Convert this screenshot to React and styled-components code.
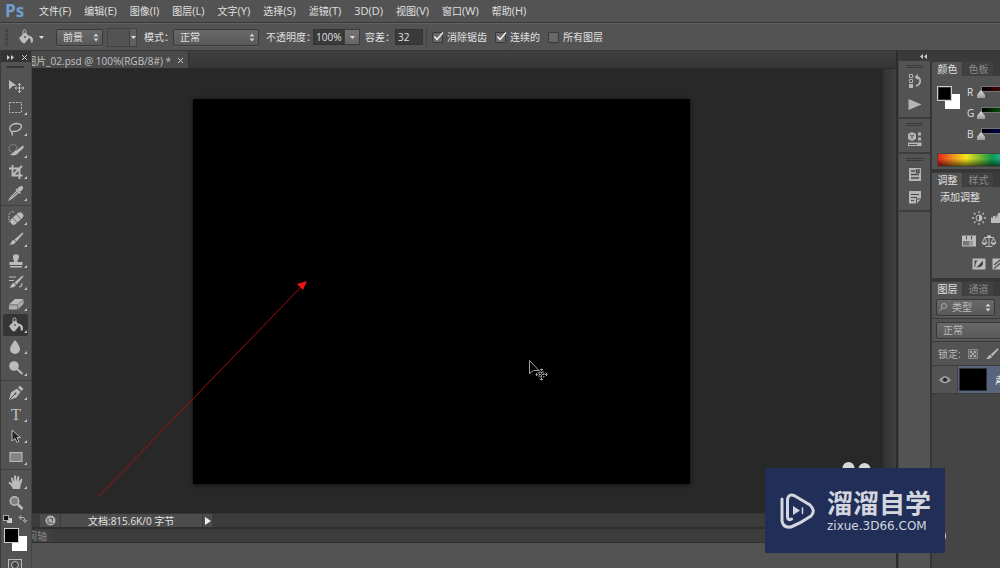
import React, { useState } from 'react'
import styled, { createGlobalStyle } from 'styled-components'

const GlobalStyle = createGlobalStyle`
* {
  box-sizing: border-box;
}
body {
  margin: 0;
  background: #535353;
  color: #e0e0e0;
  font: 10px/14px "Open Sans", "Noto Sans CJK SC", sans-serif;
}
button, input, select {
  font: inherit;
  color: inherit;
  margin: 0;
  padding: 0;
  border: 0;
  background: none;
  border-radius: 0;
}
svg {
  display: block;
  flex: none;
}
`

const Screen = styled.div`
position: relative;
display: flex;
flex-direction: column;
height: 100vh;
overflow: hidden;
white-space: nowrap;
`

/* top bars */
const MenuBar = styled.nav`
display: flex;
align-items: center;
height: 23px;
flex: none;
border-bottom: 1px solid #383838;
`
const Logo = styled.span`
width: 39px;
padding-left: 5px;
color: #6f9fd0;
font: 700 17px/20px "Open Sans", sans-serif;
`
const MenuItem = styled.button`
margin-right: 13px;
font-size: 11px;
line-height: 20px;
& span {
  font-size: 10px;
}
`
const OptionsBar = styled.div`
display: flex;
align-items: center;
height: 28px;
flex: none;
border-top: 1px solid #626262;
border-bottom: 1px solid #363636;
padding-left: 5px;
`
const BarGrip = styled.i`
width: 3px;
height: 17px;
margin-right: 10px;
background: repeating-linear-gradient(#3e3e3e 0 1px, #535353 1px 2px);
`
const PresetButton = styled.button`
display: flex;
align-items: center;
gap: 5px;
width: 32px;
margin-right: 6px;
`
const SelectBox = styled.label`
display: flex;
align-items: center;
width: ${p => p.$width};
height: 17px;
margin-right: ${p => p.$after || '0'};
padding-right: 3px;
border: 1px solid #383838;
border-radius: 2px;
background: linear-gradient(#696969, #595959);
box-shadow: 0 1px 0 #606060;
& select {
  flex: 1;
  min-width: 0;
  appearance: none;
  padding-left: 6px;
  height: 14px;
  line-height: 14px;
  outline: 0;
}
& svg + select {
  padding-left: 4px;
}
`
const Swatch = styled.button`
display: flex;
justify-content: flex-end;
align-items: center;
width: 30px;
height: 19px;
margin-right: 7px;
border: 1px solid #424242;
& span {
  display: flex;
  align-items: center;
  justify-content: center;
  width: 7px;
  height: 17px;
  border-left: 1px solid #424242;
  background: #606060;
}
`
const FieldLabel = styled.label`
margin-right: ${p => p.$after || '0'};
`
const NumberField = styled.input`
width: ${p => p.$width};
height: 16px;
padding-left: 2px;
background: #3a3a3a;
border: 1px solid #333;
outline: 0;
`
const DropButton = styled.button`
display: flex;
align-items: center;
justify-content: center;
width: 16px;
height: 16px;
margin-right: 5px;
border: 1px solid #3c3c3c;
background: linear-gradient(#757575, #666);
`
const Separator = styled.i`
width: 1px;
height: 20px;
margin: 0 5px 0 3px;
background: #434343;
`
const CheckLabel = styled.label`
display: flex;
align-items: center;
gap: 3px;
margin-right: 8px;
`
const CheckBox = styled.span`
display: grid;
width: 12px;
height: 12px;
& > * {
  grid-area: 1 / 1;
}
& input {
  appearance: none;
  width: 11px;
  height: 11px;
  margin-top: 1px;
  border: 1px solid #393939;
  border-radius: 1px;
  background: #676767;
}
& svg {
  pointer-events: none;
  opacity: 0;
}
& input:checked + svg {
  opacity: 1;
}
`

/* work area */
const Work = styled.div`
display: flex;
flex: 1;
min-height: 0;
`
const ToolBar = styled.aside`
display: flex;
flex-direction: column;
width: 32px;
flex: none;
border-left: 1px solid #3a3a3a;
border-right: 1px solid #444;
`
const PanelHead = styled.div`
display: flex;
align-items: center;
justify-content: space-between;
height: 11px;
flex: none;
padding: 1px 4px 0 6px;
background: #343434;
`
const ToolGrip = styled.i`
width: 17px;
height: 3px;
margin: 4px auto 7px 6px;
border-top: 1px solid #353535;
border-bottom: 1px solid #353535;
`
const ToolGroup = styled.div`
padding: 0 4px 0 2px;
& + & {
  margin-top: 1px;
  padding-top: 1px;
  border-top: 1px solid #404040;
}
`
const Tool = styled.button`
display: flex;
align-items: center;
justify-content: space-between;
width: 25px;
height: 21px;
padding-left: 5px;
color: #bcbcbc;
background: ${p => (p.$active ? '#353535' : 'none')};
border-radius: 2px;
&:nth-child(even) {
  height: 22px;
}
&::after {
  content: "";
  align-self: flex-end;
  width: 3px;
  height: 3px;
  margin: 0 1px 3px 0;
  background: ${p => (p.$plain ? 'none' : '#c4c4c4')};
  clip-path: polygon(100% 0, 100% 100%, 0 100%);
}
`
const ColorTools = styled.div`
padding: 0 0 0 2px;
`

const DocumentArea = styled.main`
display: flex;
flex-direction: column;
flex: 1;
min-width: 0;
border-right: 2px solid #2c2c2c;
`
const TabStrip = styled.div`
display: flex;
height: 18px;
flex: none;
background: linear-gradient(#404040, #353535);
border-bottom: 1px solid #2c2c2c;
`
const DocTab = styled.div`
display: flex;
align-items: center;
justify-content: flex-end;
width: 157px;
padding: 2px 5px 0 0;
overflow: hidden;
background: #4a4a4a;
border-right: 1px solid #303030;
color: #c2c2c2;
& button {
  margin-left: 7px;
}
`
const CanvasRow = styled.div`
display: flex;
flex: 1;
min-height: 0;
`
const Pasteboard = styled.div`
display: flex;
align-items: center;
justify-content: center;
flex: 1;
padding-right: 32px;
background: #282828;
`
const Artboard = styled.div`
width: 497px;
height: 385px;
background: #000;
box-shadow: 0 1px 4px #111;
`
const ScrollTrack = styled.div`
width: 13px;
flex: none;
background: linear-gradient(to right, #323232, #404040);
`
const StatusBar = styled.div`
display: flex;
align-items: stretch;
height: 14px;
flex: none;
background: #3b3b3b;
padding-left: 8px;
border-top: 1px solid #333;
& > * {
  background: #4c4c4c;
  display: flex;
  align-items: center;
}
`
const StatusIcon = styled.button`
width: 21px;
padding-left: 5px;
border-right: 1px solid #3b3b3b;
`
const StatusText = styled.span`
width: 141px;
padding-left: 27px;
color: #e6e6e6;
`
const StatusMore = styled.button`
width: 10px;
padding-left: 2px;
border-left: 1px solid #3b3b3b;
`
const TimelineTabs = styled.div`
display: flex;
height: 16px;
flex: none;
border-top: 2px solid #2f2f2f;
border-bottom: 1px solid #303030;
background: #3c3c3c;
`
const TimelineTab = styled.button`
display: flex;
justify-content: flex-end;
width: 20px;
padding-right: 5px;
overflow: hidden;
background: #404040;
color: #858585;
`
const Timeline = styled.div`
height: 25px;
flex: none;
background: #525252;
`

/* right side */
const Side = styled.aside`
display: flex;
flex-direction: column;
width: 102px;
flex: none;
`
const SideHead = styled.div`
height: 10px;
flex: none;
padding: 3px 0 0 22px;
background: #3a3a3a;
`
const SideColumns = styled.div`
display: flex;
flex: 1;
min-height: 0;
`
const Dock = styled.div`
width: 34px;
flex: none;
border-left: 1px solid #464646;
border-right: 2px solid #353535;
`
const DockGroup = styled.div`
display: flex;
flex-direction: column;
align-items: center;
padding: 4px 0 2px;
border-bottom: 2px solid #3d3d3d;
&::before {
  content: "";
  width: 17px;
  height: 1px;
  margin-bottom: 1px;
  border-top: 1px solid #3a3a3a;
  border-bottom: 1px solid #3a3a3a;
}
`
const DockButton = styled.button`
display: flex;
align-items: center;
height: 23px;
color: #b5b5b5;
`
const Panels = styled.div`
display: flex;
flex-direction: column;
flex: 1;
min-width: 0;
overflow: hidden;
background: #454545;
`
const Panel = styled.section`
width: 220px;
background: #535353;
border-bottom: ${p => (p.$last ? '0' : '3px solid #363636')};
`
const PanelTabs = styled.div`
display: flex;
height: 15px;
padding-top: 1px;
background: #3b3b3b;
`
const PanelTab = styled.button`
width: 30px;
padding-left: 1px;
margin-right: 1px;
background: ${p => (p.$active ? '#535353' : '#414141')};
color: ${p => (p.$active ? '#e2e2e2' : '#8b8b8b')};
`
const ColorBody = styled.div`
display: flex;
height: 77px;
padding: 5px 0 0 5px;
`
const Sliders = styled.div`
padding-left: 5px;
`
const SliderRow = styled.label`
display: flex;
align-items: center;
gap: 3px;
height: 21px;
& span {
  width: 7px;
}
& input {
  appearance: none;
  width: 64px;
  height: 12px;
  background:
    linear-gradient(to right, #000, ${p => p.$color}) 5px 1px / 58px 4px no-repeat,
    linear-gradient(#757575, #757575) 4px 0 / 60px 6px no-repeat;
}
& input::-webkit-slider-thumb {
  appearance: none;
  width: 8px;
  height: 8px;
  margin-top: 5px;
  background: linear-gradient(#ddd, #999);
  clip-path: polygon(50% 0, 100% 60%, 100% 100%, 0 100%, 0 60%);
}
`
const Spectrum = styled.div`
height: 14px;
margin-left: 5px;
border: 1px solid #444;
background:
  linear-gradient(transparent 40%, rgba(0, 0, 0, .6)),
  linear-gradient(to right, #e3241b 0, #f08c1c 14px, #f4e61e 28px, #7cba32 42px, #0d9a4c 54px, #1fb5a0 66px, #2554c8 110px, #d01da0 160px, #e3241b);
`
const ColorFoot = styled.div`
height: 2px;
`
const AdjustBody = styled.div`
height: 91px;
padding: 3px 0 0 8px;
`
const AdjustRow = styled.div`
display: flex;
gap: 4px;
padding-left: ${p => p.$indent};
& button {
  height: 23px;
  color: #bdbdbd;
}
`
const AdjustRows = styled.div`
padding-top: 2px;
`
const LayerRow = styled.div`
display: flex;
align-items: center;
height: ${p => p.$height};
padding-left: 4px;
border-bottom: 1px solid #3c3c3c;
color: #bcbcbc;
`
const LockRow = styled(LayerRow)`
gap: 7px;
padding-left: 6px;
`
const LayerItem = styled.div`
display: flex;
height: 28px;
border-bottom: 1px solid #3c3c3c;
`
const EyeButton = styled.button`
display: flex;
align-items: center;
justify-content: center;
width: 26px;
border-right: 1px solid #404040;
`
const LayerName = styled.button`
display: flex;
align-items: center;
gap: 7px;
flex: 1;
padding-left: 1px;
background: #57647b;
color: #fff;
font-style: italic;
&::before {
  content: "";
  width: 26px;
  height: 21px;
  background: #000;
  border: 1px solid #2c3038;
}
`

/* overlays */
const Overlay = styled.svg`
position: absolute;
left: ${p => p.$x};
top: ${p => p.$y};
pointer-events: none;
`
const Watermark = styled.div`
position: absolute;
right: 55px;
bottom: 15px;
display: flex;
align-items: center;
gap: 11px;
width: 180px;
height: 85px;
padding-left: 15px;
background: #212e57;
color: #d3d6df;
`
const BrandName = styled.strong`
display: block;
font: 700 26px/30px "Liberation Sans", "Noto Sans CJK SC", sans-serif;
`
const BrandUrl = styled.span`
display: block;
font: 12px/14px "DejaVu Sans", sans-serif;
`

const menus = [
  ['文件', '(F)'], ['编辑', '(E)'], ['图像', '(I)'], ['图层', '(L)'], ['文字', '(Y)'], ['选择', '(S)'],
  ['滤镜', '(T)'], ['', '3D(D)'], ['视图', '(V)'], ['窗口', '(W)'], ['帮助', '(H)'],
]

const Icon = ({ children, size = 16 }) => (
  <svg width={size} height={size} viewBox="0 0 16 16" fill="none" stroke="currentColor">{children}</svg>
)
const fill = { fill: 'currentColor', stroke: 'none' }

const bucket = (
  <g>
    <path {...fill} d="M1 9 L7 3.500 L12 8 L6.500 14.500 Q4 14.500 1 9 Z" />
    <path {...fill} d="M10 6.500 Q15 7 15 11 Q15 14 13.500 14 Q12.500 13.500 12.500 10.500 Z" />
    <path d="M5 7 V2.500 Q5 .8 6.500 .8 Q8 .8 8 2.500 V6" />
    <circle cx="7" cy="8" r="1" fill="#555" stroke="none" />
  </g>
)
const brush = (
  <g>
    <path {...fill} d="M14.500 1.500 L15.500 2.500 L8.500 10.500 L6.500 8.500 Z" />
    <path {...fill} d="M6 9 L8 11 Q6.500 14 1 13.500 Q3 12.500 3.300 11 Q4 9 6 9 Z" />
  </g>
)

const toolGroups = [
  [
    ['移动', <g><path {...fill} d="M1 2 L8.500 7.500 L5 8 L1 11.500 Z" /><path d="M11.500 5.500 V14.500 M7 10 H16 M10 7 L11.500 5.500 L13 7 M10 13 L11.500 14.500 L13 13 M8.500 8.500 L7 10 L8.500 11.500 M14.500 8.500 L16 10 L14.500 11.500" /></g>, true],
    ['矩形选框', <rect x="1.500" y="3.500" width="12" height="10" strokeDasharray="2 1.300" />],
    ['套索', <path strokeWidth="1.300" d="M4 11 Q1 9 2 6 Q4 2.500 9 2.500 Q14 3 13.500 6 Q12 10 6 10.500 Q4 10 3.500 11.500 Q5 12.500 4 14.500" />],
    ['快速选择', <g><circle cx="5" cy="6.500" r="4" strokeDasharray="1.500 1" opacity=".7" /><path {...fill} d="M15.500 3 V6 L10 11 L8 9 Z M7.500 8 L10.500 11 Q7 15 2 12.500 Q6 11 7.500 8 Z" /></g>],
    ['裁剪', <path strokeWidth="1.800" d="M4.500 1 V11.500 H14.500 M1 4.500 H11.500 V15 M5 11 L14 2" />],
    ['吸管', <g><path {...fill} d="M9 4 L12 1.200 Q14 .6 15 2 Q15.500 3.500 14.500 4.500 L12 7 Z" /><path d="M8 4 L12.500 8.500" strokeWidth="1.500" /><path d="M9.500 5.500 L3 12 L1.500 14.500 L4 13.200 L11 7" strokeWidth="1.200" /></g>],
  ],
  [
    ['修复画笔', <g><g transform="rotate(-42 9 8)"><rect x="1" y="5" width="15" height="6.500" rx="3" {...fill} /><path stroke="#777" d="M6 5 V11.500 M11 5 V11.500" /></g><path strokeDasharray="1.500 1" d="M6 2 Q1 1 1 6 V12" /></g>],
    ['画笔', brush],
    ['仿制图章', <path {...fill} d="M6 7.500 Q4 4 5.500 2 Q8 .3 10.500 2 Q12 4 9.500 7.500 V9 H14.500 V12 H1.500 V9 H6 Z M2 13 H14 V14.500 H2 Z" />],
    ['历史记录画笔', <g>{brush}<path strokeWidth="1.200" d="M1 3 H8 M1 6.500 H6 M11 13 Q14 13 14 9" /></g>],
    ['橡皮擦', <g><path {...fill} d="M7 3 L15.500 3 L9.500 8.500 L1 8.500 Z" /><path {...fill} opacity=".85" d="M1 9.200 H9 V13.500 H1 Z M9.600 9 L15.500 3.600 V8 L9.600 13.400 Z" /></g>],
    ['油漆桶', bucket],
    ['模糊', <path {...fill} d="M7 1 Q12 7 12 10 A5 5 0 0 1 2 10 Q2 7 7 1 Z" />],
    ['减淡', <g><circle cx="6" cy="6" r="4.800" {...fill} /><path strokeWidth="2" d="M9 9 L14.500 14" /></g>],
  ],
  [
    ['钢笔', <g><path {...fill} d="M1 15 L3 7.500 L9 3.500 L12.500 7 L8.500 12.500 Z M10 2.500 L12 .8 L15.500 4 L13.500 6 Z" /><path stroke="#484848" d="M1.500 14.500 L7 9" /><circle cx="7.500" cy="8.500" r="1" fill="#484848" stroke="none" /></g>],
    ['文字', <text {...fill} x="8" y="13.500" textAnchor="middle" fontFamily="Liberation Serif" fontSize="17">T</text>],
    ['路径选择', <path fill="#252525" d="M4 2 L12.500 9.500 H9 L11 13.500 L9 14.500 L7 10.500 L4 13 Z" />],
    ['矩形', <rect x="2" y="3.500" width="12" height="9" fill="#858585" />],
  ],
  [
    ['抓手', <path {...fill} d="M5 15 Q3 11 .6 9 Q.8 7 3 8.500 L4.500 10 L3 4.500 Q3.500 3 4.800 4 L6.300 8 L6 2 Q7 .5 8 2 L8.400 7.500 L9.500 2.200 Q10.800 1.500 11.300 2.800 L10.800 8 L13 4.500 Q14.500 4.500 14.300 6 L12.500 11.500 L12 15 Z" />],
    ['缩放', <g><circle cx="6.500" cy="6" r="4.200" fill="#808080" strokeWidth="1.500" /><path strokeWidth="2.500" d="M10 9.500 L14.500 14" /></g>, true],
  ],
]

const Tri = () => <svg width="5" height="3"><path d="M0 0 H5 L2.500 3 Z" fill="#ddd" /></svg>
const UpDown = () => <svg width="6" height="9" fill="#d0d0d0"><path d="M0.500 3.500 L3 0.500 L5.500 3.500 Z M0.500 5.500 L3 8.500 L5.500 5.500 Z" /></svg>
const Cross = () => <svg width="5" height="5" stroke="#ccc"><path d="M0 0 L5 5 M5 0 L0 5" /></svg>

const Select = ({ label, value, ...rest }) => (
  <SelectBox {...rest}>
    <select aria-label={label} defaultValue={value}><option>{value}</option></select>
    <UpDown />
  </SelectBox>
)

const Check = ({ label, on }) => (
  <CheckLabel>
    <CheckBox>
      <input type="checkbox" defaultChecked={on} />
      <svg width="13" height="12" fill="none" stroke="#eee" strokeWidth="1.500"><path d="M2.500 5.500 L5 8.500 L11 1.500" /></svg>
    </CheckBox>
    {label}
  </CheckLabel>
)

const App = () => {
  const [tool, setTool] = useState('油漆桶')

  return (
    <Screen>
      <GlobalStyle />
      <MenuBar>
        <Logo>Ps</Logo>
        {menus.map(([name, key]) => (
          <MenuItem key={key}><span>{name}</span>{key}</MenuItem>
        ))}
      </MenuBar>

      <OptionsBar>
        <BarGrip />
        <PresetButton aria-label="工具预设">
          <svg width="16" height="16" viewBox="0 0 16 16" fill="none" stroke="#bdbdbd" color="#bdbdbd">{bucket}</svg>
          <Tri />
        </PresetButton>
        <Select label="填充源" value="前景" $width="47px" $after="4px" />
        <Swatch aria-label="图案"><span><Tri /></span></Swatch>
        <FieldLabel as="span" $after="-1px">模式：</FieldLabel>
        <Select label="模式" value="正常" $width="86px" $after="7px" />
        <FieldLabel htmlFor="opacity" $after="-3px">不透明度：</FieldLabel>
        <NumberField id="opacity" defaultValue="100%" $width="31px" />
        <DropButton aria-label="不透明度滑块"><Tri /></DropButton>
        <FieldLabel htmlFor="tolerance">容差：</FieldLabel>
        <NumberField id="tolerance" defaultValue="32" $width="28px" />
        <Separator />
        <Check label="消除锯齿" on />
        <Check label="连续的" on />
        <Check label="所有图层" />
      </OptionsBar>

      <Work>
        <ToolBar>
          <PanelHead>
            <svg width="8" height="5" fill="#ccc"><path d="M0 0 L3 2.500 L0 5 Z M4 0 L7 2.500 L4 5 Z" /></svg>
            <Cross />
          </PanelHead>
          <ToolGrip />
          {toolGroups.map((group, i) => (
            <ToolGroup key={i}>
              {group.map(([name, art, plain]) => (
                <Tool key={name} aria-label={name} $active={tool === name} $plain={plain} onClick={() => setTool(name)}>
                  <Icon>{art}</Icon>
                </Tool>
              ))}
            </ToolGroup>
          ))}
          <ColorTools>
            <svg width="26" height="60">
              <rect x="4" y="4" width="5" height="5" fill="#ccc" />
              <rect x="0.500" y="1.500" width="5" height="5" fill="#111" stroke="#aaa" />
              <path d="M17 3.500 H20 Q22 3.500 22 7 M18.500 1 L16 3.500 L18.500 6 M20 6 L22 8.500 L24 6" fill="none" stroke="#bbb" />
              <rect x="9" y="22" width="15" height="15" fill="#fff" />
              <rect x="1.500" y="14.500" width="14" height="14" fill="#000" stroke="#ccc" />
              <rect x="5.500" y="45.500" width="13" height="11" fill="none" stroke="#bbb" />
              <circle cx="12" cy="51" r="3.500" fill="#444" stroke="#bbb" />
            </svg>
          </ColorTools>
        </ToolBar>

        <DocumentArea>
          <TabStrip>
            <DocTab>
              图片_02.psd @ 100%(RGB/8#) *
              <button aria-label="关闭"><Cross /></button>
            </DocTab>
          </TabStrip>
          <CanvasRow>
            <Pasteboard><Artboard /></Pasteboard>
            <ScrollTrack />
          </CanvasRow>
          <StatusBar>
            <StatusIcon aria-label="同步">
              <svg width="11" height="11" fill="none" stroke="#4b4b4b"><circle cx="5.500" cy="5.500" r="5" fill="#b0b0b0" stroke="none" /><path d="M3 3 V8 H8 M5 3.500 H7.500 V6" /></svg>
            </StatusIcon>
            <StatusText>文档:815.6K/0 字节</StatusText>
            <StatusMore aria-label="更多"><svg width="6" height="8"><path d="M0 0 L6 4 L0 8 Z" fill="#eee" /></svg></StatusMore>
          </StatusBar>
          <TimelineTabs><TimelineTab>间轴</TimelineTab></TimelineTabs>
          <Timeline />
        </DocumentArea>

        <Side>
          <SideHead>
            <svg width="7" height="5" fill="#ccc"><path d="M3 0 L0 2.500 L3 5 Z M7 0 L4 2.500 L7 5 Z" /></svg>
          </SideHead>
          <SideColumns>
            <Dock>
              <DockGroup>
                <DockButton aria-label="历史记录"><Icon>
                  <path d="M2.500 1.500 H5.500 V4.500 H2.500 Z M2.500 6.500 H5.500 V9.500 H2.500 Z" /><path {...fill} d="M2 11 H6 V15 H2 Z" />
                  <path strokeWidth="1.800" d="M9 13 Q14 11 13 6.500 Q12 4 9 4" /><path {...fill} d="M7.500 4 L11 1 V7 Z" />
                </Icon></DockButton>
                <DockButton aria-label="动作"><Icon><path {...fill} d="M1.500 3 L14.500 8.500 L1.500 14 Z" /></Icon></DockButton>
              </DockGroup>
              <DockGroup>
                <DockButton aria-label="属性"><Icon>
                  <path {...fill} d="M1 3 L5 1 L9 3 V8 L5 10 L1 8 Z M11 1.500 H14 V4.500 H11 Z M11 6.500 H14 V9.500 H11 Z M1 11.500 H14.500 V15 H1 Z" />
                  <path stroke="#535353" d="M3 4 L5 5 L7 4 M5 5 V8 M2 13.500 H10" />
                </Icon></DockButton>
              </DockGroup>
              <DockGroup>
                <DockButton aria-label="信息"><Icon>
                  <path {...fill} d="M2 2 H14 V15 H2 Z" /><path stroke="#4b4b4b" strokeWidth="1.500" d="M4 8.500 H12 M4 12 H12 M4 5 H8 M9.500 4 H12 V6.500 H9.500 Z" />
                </Icon></DockButton>
                <DockButton aria-label="注释"><Icon>
                  <path {...fill} d="M2 2 H14 V9.500 H9 V14.500 H2 Z M10 10.500 H13.500 L10 14.500 Z" /><path stroke="#4b4b4b" d="M4 5.500 H12 M4 8.500 H10 M4 11.500 H7" />
                </Icon></DockButton>
              </DockGroup>
            </Dock>

            <Panels>
              <Panel>
                <PanelTabs>
                  <PanelTab $active>颜色</PanelTab>
                  <PanelTab>色板</PanelTab>
                </PanelTabs>
                <ColorBody>
                  <svg width="25" height="30">
                    <rect x="8" y="13" width="15" height="15" fill="#fff" />
                    <rect x="0.500" y="5.500" width="14" height="14" fill="#000" stroke="#ccc" />
                    <rect x="1.500" y="6.500" width="12" height="12" fill="#000" stroke="#333" />
                  </svg>
                  <Sliders>
                    {[['R', '#f00'], ['G', '#0f0'], ['B', '#00f']].map(([name, color]) => (
                      <SliderRow key={name} $color={color}>
                        <span>{name}</span>
                        <input type="range" min="0" max="255" defaultValue="0" />
                      </SliderRow>
                    ))}
                  </Sliders>
                </ColorBody>
                <Spectrum />
                <ColorFoot />
              </Panel>
              <Panel>
                <PanelTabs>
                  <PanelTab $active>调整</PanelTab>
                  <PanelTab>样式</PanelTab>
                </PanelTabs>
                <AdjustBody>
                  添加调整
                  <AdjustRows>
                    <AdjustRow $indent="31px">
                      <button aria-label="亮度/对比度"><Icon>
                        <circle cx="8" cy="8" r="3" /><path {...fill} d="M8 5 A3 3 0 0 1 8 11 Z" />
                        <path strokeWidth="1.300" d="M8 1 V3 M8 13 V15 M1 8 H3 M13 8 H15 M3 3 L4.500 4.500 M11.500 11.500 L13 13 M13 3 L11.500 4.500 M4.500 11.500 L3 13" />
                      </Icon></button>
                      <button aria-label="色阶"><Icon><path {...fill} d="M0 12 V8 L1 7 L2 9 V6 H4 V9 L5 5 L6 8 L7 3 H9 V12 H10 V6 H12 V12 H13 V9 H15 V13 H0 Z" /></Icon></button>
                    </AdjustRow>
                    <AdjustRow $indent="21px">
                      <button aria-label="色相/饱和度"><Icon><path {...fill} d="M1 2.500 H15 V13.500 H1 Z" /><path stroke="#555" d="M5.500 3 V6.500 M10.500 3 V6.500" /><path fill="#777" stroke="none" d="M2 8 H8 V12.500 H2 Z" /><path fill="#999" stroke="none" d="M8 8 H12 V12.500 H8 Z" /></Icon></button>
                      <button aria-label="色彩平衡"><Icon><path d="M8 2 V13 M4.500 13.500 H11.500 M3 4.500 H13 M3.500 5 L1 10 H6 Z M12.500 5 L10 10 H15 Z" /><path {...fill} d="M1 10 H6 Q5.500 12 3.500 12 Q1.500 12 1 10 Z M10 10 H15 Q14.500 12 12.500 12 Q10.500 12 10 10 Z M6 2.500 H10 V5 H6 Z" /></Icon></button>
                    </AdjustRow>
                    <AdjustRow $indent="31px">
                      <button aria-label="反相"><Icon><path {...fill} d="M1.500 2.500 H14.500 V13.500 H1.500 Z" /><path fill="#444" stroke="none" d="M3.500 4.500 H7 Q4 6.500 4.500 10 L3.500 11.500 Z M12 4.500 Q13 12 5.500 11.500 Z" /></Icon></button>
                      <button aria-label="色调分离"><Icon><path {...fill} d="M1.500 2.500 H14.500 V13.500 H1.500 Z" /><path stroke="#555" strokeWidth="1.500" d="M3 9 L9 4 M3 12.500 L13 4" /></Icon></button>
                    </AdjustRow>
                  </AdjustRows>
                </AdjustBody>
              </Panel>
              <Panel $last>
                <PanelTabs>
                  <PanelTab $active>图层</PanelTab>
                  <PanelTab>通道</PanelTab>
                </PanelTabs>
                <LayerRow $height="23px">
                  <SelectBox $width="59px">
                    <svg width="11" height="10" fill="none" stroke="#aaa"><circle cx="7" cy="4" r="2.500" /><path d="M5 6 L2.500 9" /></svg>
                    <select aria-label="图层过滤" defaultValue="类型"><option>类型</option></select>
                    <UpDown />
                  </SelectBox>
                </LayerRow>
                <LayerRow $height="23px">
                  <Select label="混合模式" value="正常" $width="110px" />
                </LayerRow>
                <LockRow $height="24px">
                  锁定:
                  <button aria-label="锁定透明像素"><svg width="10" height="10"><path d="M0.500 0.500 H9.500 V9.500 H0.500 Z" fill="#666" stroke="#888" /><path d="M2 2 H4 V4 H2 Z M6 2 H8 V4 H6 Z M4 4 H6 V6 H4 Z M2 6 H4 V8 H2 Z M6 6 H8 V8 H6 Z" fill="#aaa" /></svg></button>
                  <button aria-label="锁定图像像素"><Icon size={14}>{brush}</Icon></button>
                </LockRow>
                <LayerItem>
                  <EyeButton aria-label="可见性">
                    <svg width="12" height="8"><path d="M0.500 4 Q6 -2.500 11.500 4 Q6 9.500 0.500 4 Z" fill="#888" stroke="#b8b8b8" /><circle cx="6" cy="3.800" r="2" fill="#222" /></svg>
                  </EyeButton>
                  <LayerName>背景</LayerName>
                </LayerItem>
              </Panel>
            </Panels>
          </SideColumns>
        </Side>
      </Work>

      <Overlay $x="90px" $y="270px" width="230" height="235">
        <path d="M9 226 L212 16" stroke="#a80f0f" fill="none" />
        <path d="M217 11 L213 20 L207 14 Z" fill="#f01414" />
      </Overlay>
      <Overlay $x="525px" $y="357px" width="26" height="28" fill="none" stroke="#a0a0a0">
        <path d="M4.500 3.500 V16.500 L8.500 13.500 H14 Z" />
        <path d="M16.500 12 V23 M11 17.500 H22 M14.500 13.500 L16.500 11.500 L18.500 13.500 M14.500 21.500 L16.500 23.500 L18.500 21.500 M12.500 15.500 L10.500 17.500 L12.500 19.500 M20.500 15.500 L22.500 17.500 L20.500 19.500 M14 15 H19 V20 H14 Z" strokeDasharray="2 1" />
      </Overlay>
      <Overlay $x="840px" $y="460px" width="108" height="84" fill="#d8d8d8">
        <circle cx="8.500" cy="8" r="6" />
        <circle cx="24.500" cy="9" r="6" />
        <circle cx="98" cy="76" r="8" />
      </Overlay>
      <Watermark>
        <svg width="36" height="38" viewBox="0 0 36 38" fill="none" stroke="#d3d6df" strokeWidth="3" strokeLinecap="round">
          <path d="M2 7 V29 Q3 36 11 35 Q21 31 31 24 Q36 19 30 13 L15 4 Q8 1 7.500 8 V25 Q8 29 11.500 27" />
          <path d="M13 14 L20 18.500 L13 23 Z" fill="#d3d6df" stroke="none" />
          <path d="M22.500 16 V21.500" strokeWidth="1.500" />
        </svg>
        <div>
          <BrandName>溜溜自学</BrandName>
          <BrandUrl>zixue.3D66.COM</BrandUrl>
        </div>
      </Watermark>
    </Screen>
  )
}

export default App
